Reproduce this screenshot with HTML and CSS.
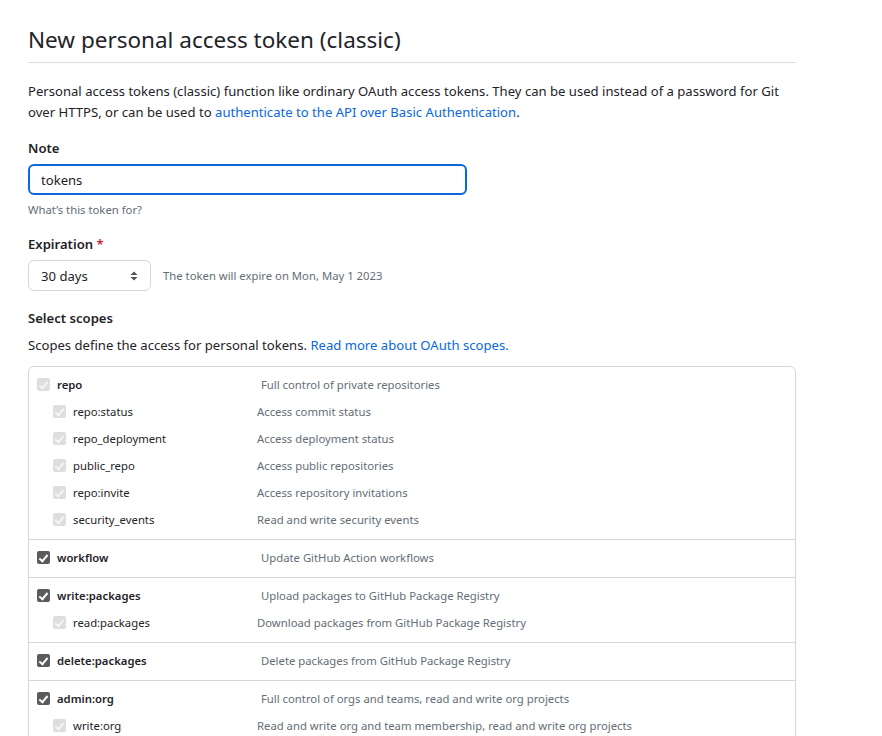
FILE: index.html
```html
<!DOCTYPE html>
<html>
<head>
<meta charset="utf-8">
<link rel="stylesheet" href="styles.css">
</head>
<body>
<div class="page">
  <h2 class="title">New personal access token (classic)</h2>
  <p class="intro">Personal access tokens (classic) function like ordinary OAuth access tokens. They can be used instead of a password for Git over HTTPS, or can be used to <a href="#">authenticate to the API over Basic Authentication</a>.</p>

  <div class="field">
    <div class="label">Note</div>
    <div class="input">tokens</div>
    <div class="hint">What’s this token for?</div>
  </div>

  <div class="field">
    <div class="label">Expiration <span class="req">*</span></div>
    <div class="exp-row">
      <div class="select"><span>30 days</span>
        <svg class="arrows" width="8" height="12" viewBox="0 0 8 12"><path d="M4 1.5 L7.5 5 L0.5 5 Z" fill="#555"/><path d="M4 10.5 L7.5 7 L0.5 7 Z" fill="#555"/></svg>
      </div>
      <span class="exp-note">The token will expire on Mon, May 1 2023</span>
    </div>
  </div>

  <div class="label scopes-label">Select scopes</div>
  <p class="scopes-desc">Scopes define the access for personal tokens. <a href="#">Read more about OAuth scopes.</a></p>

  <div class="scopes">
    <div class="group">
      <div class="row top"><span class="cb dis"></span><span class="name">repo</span><span class="desc">Full control of private repositories</span></div>
      <div class="row sub"><span class="cb dis"></span><span class="name">repo:status</span><span class="desc">Access commit status</span></div>
      <div class="row sub"><span class="cb dis"></span><span class="name">repo_deployment</span><span class="desc">Access deployment status</span></div>
      <div class="row sub"><span class="cb dis"></span><span class="name">public_repo</span><span class="desc">Access public repositories</span></div>
      <div class="row sub"><span class="cb dis"></span><span class="name">repo:invite</span><span class="desc">Access repository invitations</span></div>
      <div class="row sub"><span class="cb dis"></span><span class="name">security_events</span><span class="desc">Read and write security events</span></div>
    </div>
    <div class="group">
      <div class="row top"><span class="cb on"></span><span class="name">workflow</span><span class="desc">Update GitHub Action workflows</span></div>
    </div>
    <div class="group">
      <div class="row top"><span class="cb on"></span><span class="name">write:packages</span><span class="desc">Upload packages to GitHub Package Registry</span></div>
      <div class="row sub"><span class="cb dis"></span><span class="name">read:packages</span><span class="desc">Download packages from GitHub Package Registry</span></div>
    </div>
    <div class="group">
      <div class="row top"><span class="cb on"></span><span class="name">delete:packages</span><span class="desc">Delete packages from GitHub Package Registry</span></div>
    </div>
    <div class="group">
      <div class="row top"><span class="cb on"></span><span class="name">admin:org</span><span class="desc">Full control of orgs and teams, read and write org projects</span></div>
      <div class="row sub"><span class="cb dis"></span><span class="name">write:org</span><span class="desc">Read and write org and team membership, read and write org projects</span></div>
      <div class="row sub"><span class="cb dis"></span><span class="name">read:org</span><span class="desc">Read org and team membership, read org projects</span></div>
    </div>
  </div>
</div>
</body>
</html>
```
FILE: styles.css
```css
html, body {
  margin: 0;
  padding: 0;
  background: #ffffff;
}
body {
  font-family: "Noto Sans", "Open Sans", sans-serif;
  color: #1f2328;
  font-size: 13.1px;
  line-height: 1.5;
  height: 736px;
  overflow: hidden;
}
.page {
  width: 768px;
  margin-left: 28px;
  padding-top: 20px;
}
.title {
  margin: 0;
  font-size: 22.5px;
  font-weight: 400;
  line-height: 40px;
  padding-bottom: 2px;
  border-bottom: 1px solid #d8dee4;
}
.intro {
  margin: 18px 0 15px 0;
  line-height: 21px;
}
a {
  color: #0969da;
  text-decoration: none;
}
.field {
  margin-bottom: 15px;
}
.label {
  font-weight: 600;
  line-height: 21px;
  margin-bottom: 5px;
}
.req {
  color: #cf222e;
}
.input {
  box-sizing: border-box;
  width: 439px;
  height: 31px;
  border: 2px solid #0969da;
  border-radius: 6px;
  padding: 1px 11px 0 11px;
  line-height: 26px;
}
.hint {
  font-size: 11.3px;
  color: #656d76;
  margin-top: 6px;
  line-height: 18px;
}
.exp-row {
  display: flex;
  align-items: center;
  gap: 12px;
}
.select {
  box-sizing: border-box;
  width: 123px;
  height: 31px;
  border: 1px solid #d0d7de;
  border-radius: 6px;
  padding: 1px 12px 0 12px;
  line-height: 28px;
  display: flex;
  align-items: center;
  justify-content: space-between;
}
.arrows {
  display: block;
}
.exp-note {
  font-size: 11.3px;
  color: #656d76;
  padding-top: 2px;
}
.scopes-label {
  margin-top: 17px;
  margin-bottom: 6px;
}
.scopes-desc {
  margin: 0 0 10px 0;
  line-height: 21px;
}
.scopes {
  border: 1px solid #d0d7de;
  border-radius: 6px;
}
.group {
  padding: 5px 0 5px 0;
  border-bottom: 1px solid #d0d7de;
}
.row {
  display: flex;
  align-items: center;
  height: 27px;
  font-size: 11.3px;
}
.row.top {
  padding-left: 8px;
}
.row.sub {
  padding-left: 24px;
}
.cb {
  box-sizing: border-box;
  width: 13px;
  height: 13px;
  border-radius: 2px;
  margin-right: 7px;
  flex: none;
  position: relative;
  top: -1px;
}
.cb::after {
  content: "";
  position: absolute;
  left: 4px;
  top: 1.5px;
  width: 3px;
  height: 7px;
  border: solid #ffffff;
  border-width: 0 2px 2px 0;
  transform: rotate(40deg);
}
.cb.dis {
  background: #dedede;
}
.cb.dis::after {
  border-color: #f5f5f5;
}
.cb.on {
  background: #5b5b5b;
}
.name {
  color: #1f2328;
}
.row.top .name {
  font-weight: 600;
  width: 204px;
}
.row.sub .name {
  width: 184px;
}
.desc {
  color: #656d76;
}
```
